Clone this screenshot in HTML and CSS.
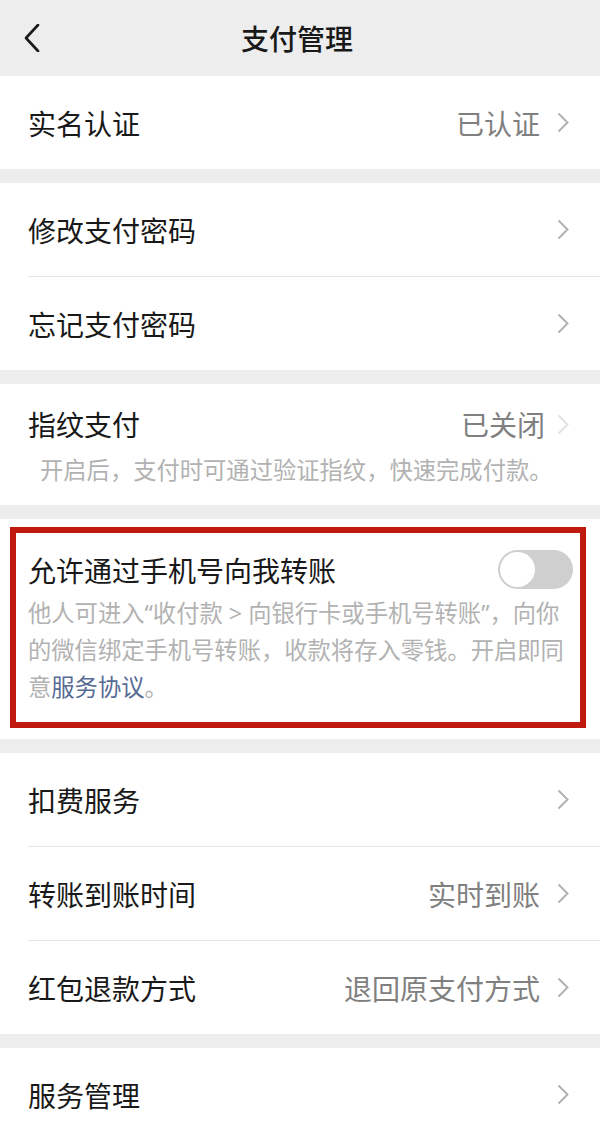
FILE: index.html
```html
<!DOCTYPE html>
<html lang="zh-CN">
<head>
    <meta charset="UTF-8">
    <meta name="viewport" content="width=device-width, initial-scale=1.0">
    <link rel="stylesheet" href="styles.css">
    <title>支付管理</title>
</head>
<body class="paybody">
    <header class="navbar">
        <span class="back">
            <svg width="16" height="28" viewBox="0 0 16 28"><path d="M14 1 L2 14 L14 27" fill="none" stroke="#191919" stroke-width="2.6" stroke-linecap="round" stroke-linejoin="round"/></svg>
        </span>
        <h1 class="navtitle">支付管理</h1>
        <span></span>
    </header>

    <section class="group">
        <div class="cell">
            <span class="cell-title">实名认证</span>
            <span class="cell-value">已认证</span>
            <svg class="arrow" width="12" height="21" viewBox="0 0 12 21"><path d="M1.5 1.5 L10.5 10.5 L1.5 19.5" fill="none" stroke="#b2b2b2" stroke-width="2"/></svg>
        </div>
    </section>

    <section class="group">
        <div class="cell">
            <span class="cell-title">修改支付密码</span>
            <svg class="arrow" width="12" height="21" viewBox="0 0 12 21"><path d="M1.5 1.5 L10.5 10.5 L1.5 19.5" fill="none" stroke="#b2b2b2" stroke-width="2"/></svg>
        </div>
        <div class="cell">
            <span class="cell-title">忘记支付密码</span>
            <svg class="arrow" width="12" height="21" viewBox="0 0 12 21"><path d="M1.5 1.5 L10.5 10.5 L1.5 19.5" fill="none" stroke="#b2b2b2" stroke-width="2"/></svg>
        </div>
    </section>

    <section class="group">
        <div class="cell cell-top">
            <span class="cell-title">指纹支付</span>
            <span class="cell-value value-off">已关闭</span>
            <svg class="arrow" width="12" height="21" viewBox="0 0 12 21"><path d="M1.5 1.5 L10.5 10.5 L1.5 19.5" fill="none" stroke="#e3e3e3" stroke-width="2"/></svg>
        </div>
        <p class="finger-desc">开启后，支付时可通过验证指纹，快速完成付款。</p>
    </section>

    <section class="group highlight">
        <div class="outline">
            <div class="switch-row">
                <span class="cell-title">允许通过手机号向我转账</span>
                <span class="switch"><span class="knob"></span></span>
            </div>
            <p class="desc">他人可进入“收付款 &gt; 向银行卡或手机号转账”，向你的微信绑定手机号转账，收款将存入零钱。开启即同意<span class="link">服务协议</span>。</p>
        </div>
    </section>

    <section class="group">
        <div class="cell">
            <span class="cell-title">扣费服务</span>
            <svg class="arrow" width="12" height="21" viewBox="0 0 12 21"><path d="M1.5 1.5 L10.5 10.5 L1.5 19.5" fill="none" stroke="#b2b2b2" stroke-width="2"/></svg>
        </div>
        <div class="cell">
            <span class="cell-title">转账到账时间</span>
            <span class="cell-value">实时到账</span>
            <svg class="arrow" width="12" height="21" viewBox="0 0 12 21"><path d="M1.5 1.5 L10.5 10.5 L1.5 19.5" fill="none" stroke="#b2b2b2" stroke-width="2"/></svg>
        </div>
        <div class="cell">
            <span class="cell-title">红包退款方式</span>
            <span class="cell-value">退回原支付方式</span>
            <svg class="arrow" width="12" height="21" viewBox="0 0 12 21"><path d="M1.5 1.5 L10.5 10.5 L1.5 19.5" fill="none" stroke="#b2b2b2" stroke-width="2"/></svg>
        </div>
    </section>

    <section class="group">
        <div class="cell">
            <span class="cell-title">服务管理</span>
            <svg class="arrow" width="12" height="21" viewBox="0 0 12 21"><path d="M1.5 1.5 L10.5 10.5 L1.5 19.5" fill="none" stroke="#b2b2b2" stroke-width="2"/></svg>
        </div>
    </section>
</body>
</html>
```

FILE: styles.css
```css
*{
    margin: 0;
    padding: 0;
    box-sizing: border-box;
}
:root{
    --text-color: #191919;
    --sub-color: #808080;
    --desc-color: #b2b2b2;
    --line-color: #e5e5e5;
}
.paybody{
    background-color: #ededed;
    font-family: "Noto Sans CJK SC", "Noto Sans", sans-serif;
    color: var(--text-color);
    overflow: hidden;
}
.navbar{
    display: grid;
    grid-template-columns: 1fr auto 1fr;
    align-items: center;
    height: 76px;
}
.back{
    display: flex;
    align-items: center;
    padding-left: 24px;
}
.navtitle{
    font-size: 28px;
    font-weight: 500;
    line-height: 36px;
    padding-right: 6px;
}
.group{
    background: #fff;
    margin-bottom: 14px;
}
.cell{
    display: flex;
    align-items: center;
    height: 93px;
    margin-left: 28px;
    padding-right: 31px;
}
.cell + .cell{
    border-top: 1px solid var(--line-color);
    height: 94px;
}
.cell-title{
    font-size: 28px;
    line-height: 36px;
    flex: 1;
}
.cell-value{
    font-size: 28px;
    line-height: 36px;
    color: var(--sub-color);
    margin-right: 17px;
}
.arrow{
    display: block;
    flex-shrink: 0;
}
.cell-top{
    height: auto;
    padding-top: 22px;
}
.value-off{
    margin-right: 12px;
}
.finger-desc{
    font-size: 23.3px;
    line-height: 36px;
    color: var(--desc-color);
    padding: 9px 0 18px 40px;
}
.highlight{
    padding: 8px 14px 11px 10px;
}
.outline{
    border: 6px solid #c01a10;
    padding: 17px 7px 16px 12px;
}
.switch-row{
    display: flex;
    align-items: center;
    margin-bottom: 6px;
}
.switch{
    display: flex;
    align-items: center;
    width: 75px;
    height: 39px;
    border-radius: 20px;
    background: #cfcfcf;
    padding: 2px;
}
.knob{
    width: 35px;
    height: 35px;
    border-radius: 50%;
    background: #fff;
}
.desc{
    font-family: "Noto Sans", "Noto Sans CJK SC", sans-serif;
    font-size: 23.3px;
    line-height: 37px;
    color: var(--desc-color);
}
.link{
    color: #576b95;
}
```
